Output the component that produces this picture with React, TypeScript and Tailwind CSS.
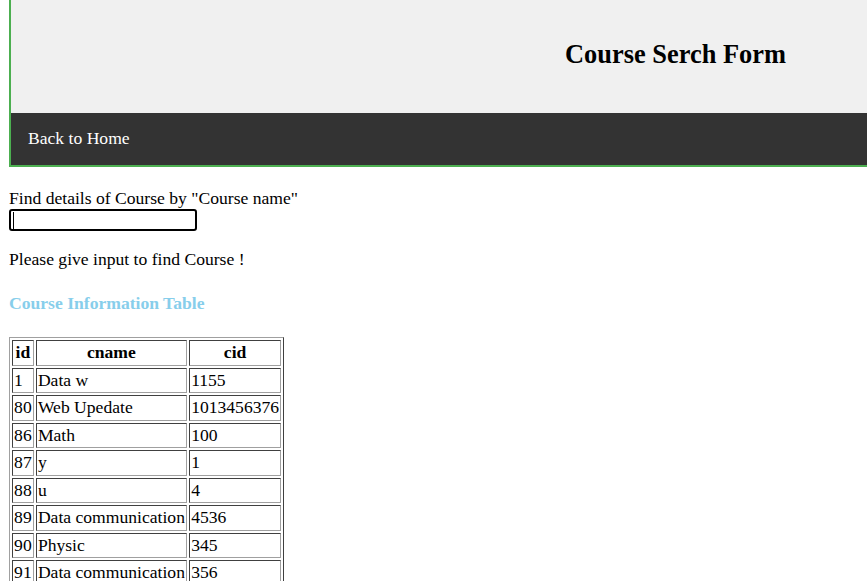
import React from "react";

const rows: [string, string, string][] = [
  ["1", "Data w", "1155"],
  ["80", "Web Upedate", "1013456376"],
  ["86", "Math", "100"],
  ["87", "y", "1"],
  ["88", "u", "4"],
  ["89", "Data communication", "4536"],
  ["90", "Physic", "345"],
  ["91", "Data communication", "356"],
];

const cell =
  "border border-t-[#404040] border-l-[#404040] border-r-[#a0a0a0] border-b-[#a0a0a0] px-[1.1px] py-[1.1px] leading-[21.3px] whitespace-nowrap";

export default function App() {
  return (
    <div className="w-[867px] h-[581px] overflow-hidden bg-white font-['Liberation_Serif','Times_New_Roman',serif] text-[17.6px] leading-[20.2px] text-black">
      <div className="ml-[9px] w-[1331px] border-l-2 border-b-2 border-[#4caf50]">
        <div className="h-[113px] bg-[#f0f0f0] pt-[38.5px] text-center">
          <h2 className="text-[26.4px] leading-[30.4px] font-bold">Course Serch Form</h2>
        </div>
        <div className="h-[52px] bg-[#333333] flex items-center pl-[17px] pb-[2px] text-white">
          <a>Back to Home</a>
        </div>
      </div>
      <div className="px-[9px]">
        <div className="mt-[21.3px]">Find details of Course by "Course name"</div>
        <div className="relative mt-[0.5px] h-[22px] w-[188px] border-2 border-black rounded-[3px] bg-white">
          <div className="absolute left-[2px] top-[1px] h-[17px] w-[1px] bg-black" />
        </div>
        <p className="mt-[17.8px]">Please give input to find Course !</p>
        <h4 className="mt-[23.6px] font-bold text-[#87ceeb]">Course Information Table</h4>
        <table className="mt-[24.6px] border-separate border-spacing-[2.2px] border border-t-[#a0a0a0] border-l-[#a0a0a0] border-r-[#404040] border-b-[#404040]">
          <thead>
            <tr>
              <th className={cell + " text-center font-bold"}>id</th>
              <th className={cell + " text-center font-bold"}>cname</th>
              <th className={cell + " text-center font-bold"}>cid</th>
            </tr>
          </thead>
          <tbody>
            {rows.map((r) => (
              <tr key={r[0]}>
                <td className={cell + " text-left"}>{r[0]}</td>
                <td className={cell + " text-left"}>{r[1]}</td>
                <td className={cell + " text-left"}>{r[2]}</td>
              </tr>
            ))}
          </tbody>
        </table>
      </div>
    </div>
  );
}
